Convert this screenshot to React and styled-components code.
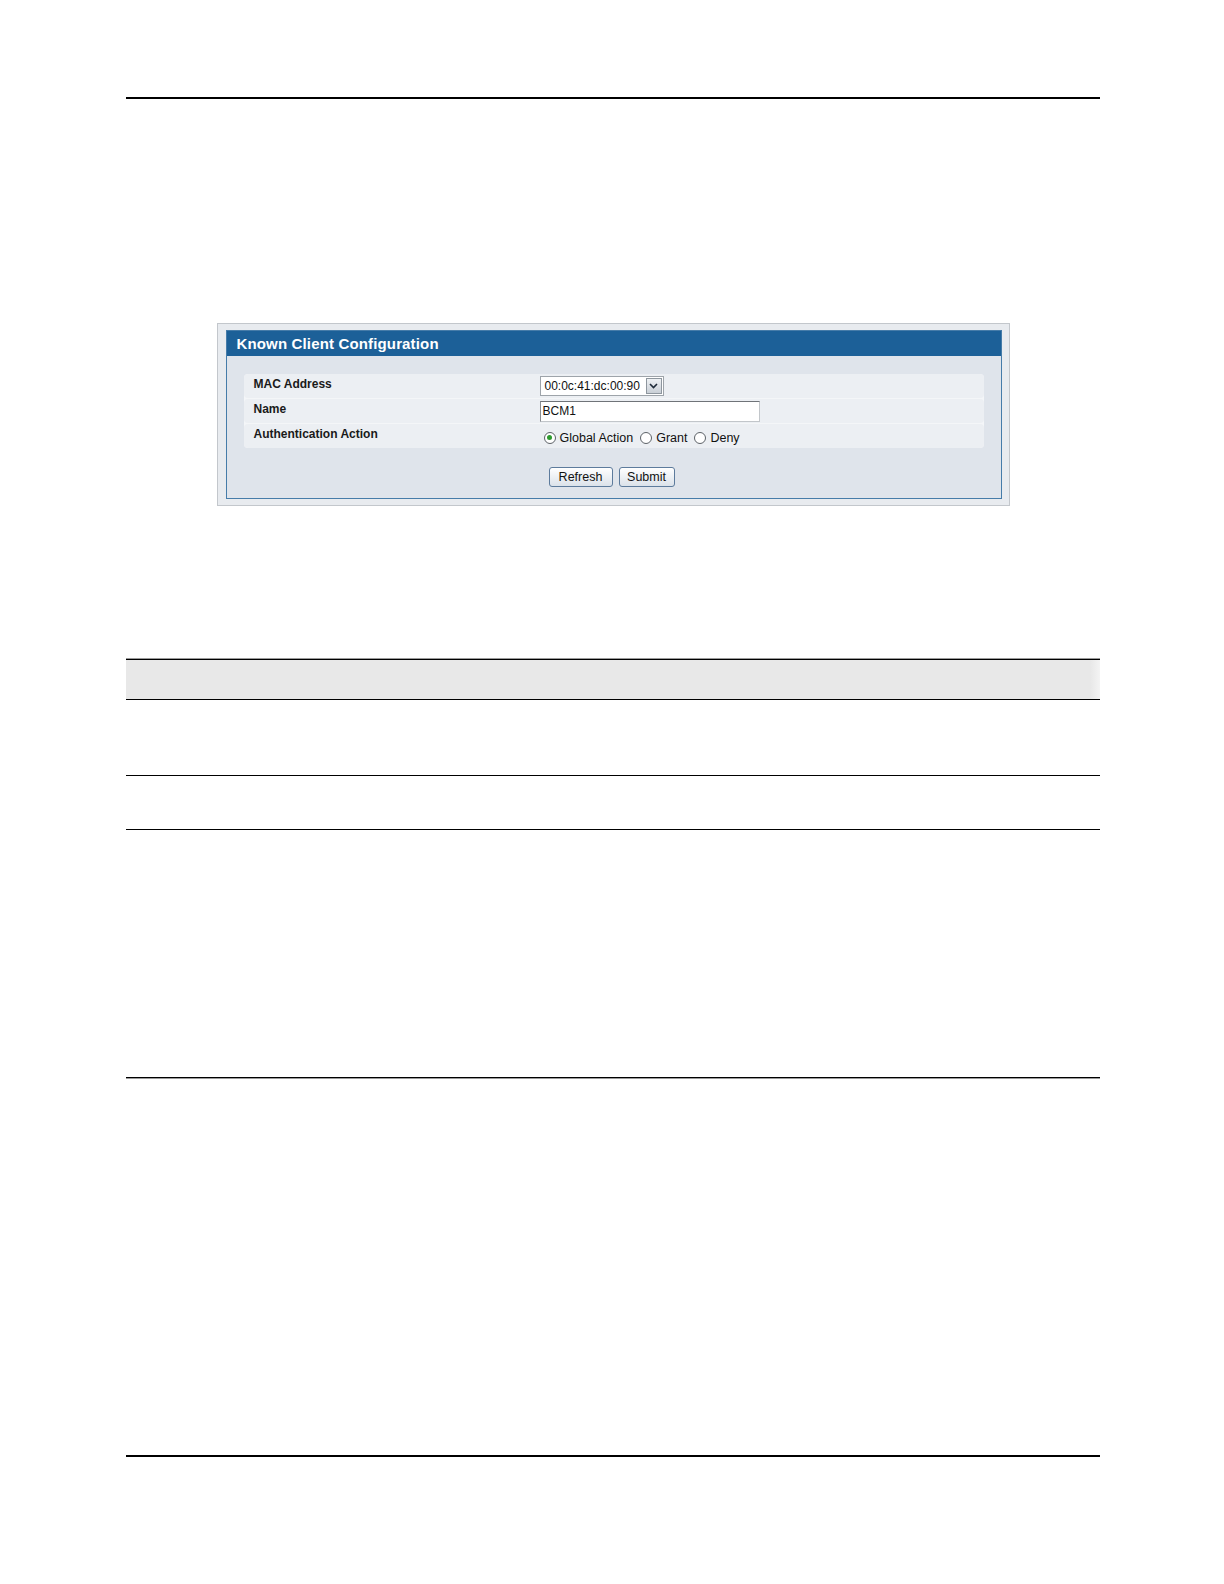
import React from 'react'
import styled, { createGlobalStyle } from 'styled-components'

const GlobalStyle = createGlobalStyle`
  html, body {
    margin: 0;
    padding: 0;
    background: #fff;
  }
  body {
    font-family: "Liberation Sans", Arial, sans-serif;
  }
`

const Page = styled.div`
  width: 1224px;
  min-height: 1584px;
  box-sizing: border-box;
  padding: 97px 124px 0 126px;
  display: flex;
  flex-direction: column;
`

const Rule = styled.div`
  height: 2px;
  background: #000;
  margin-top: ${props => props.top || 0}px;
`

const Figure = styled.div`
  margin-top: 224px;
  display: flex;
  justify-content: center;
`

const Frame = styled.div`
  width: 793px;
  box-sizing: border-box;
  border: 1px solid #c3c7cc;
  background: #e8ebef;
  padding: 6px 7px 6px 8px;
`

const Panel = styled.div`
  border: 1px solid #467ca9;
  background: #dfe4eb;
  padding-bottom: 11px;
`

const PanelTitle = styled.div`
  height: 25px;
  background: #1c6098;
  color: #fff;
  font-weight: bold;
  font-size: 15px;
  line-height: 25px;
  padding-left: 10px;
  letter-spacing: 0.15px;
`

const RowGroup = styled.div`
  margin: 18px 17px 0 17px;
  display: flex;
  flex-direction: column;
  gap: 1px;
  background: #f4f6f8;
  border-radius: 4px;
`

const Row = styled.div`
  display: flex;
  height: 24px;
  background: #eceff3;
  border-radius: 4px;
`

const Label = styled.div`
  width: 296px;
  box-sizing: border-box;
  padding: 3px 0 0 10px;
  font-size: 12px;
  font-weight: bold;
  color: #1a1a1a;
`

const Value = styled.div`
  flex: 1;
  display: flex;
  align-items: ${props => (props.top ? 'flex-start' : 'center')};
  font-size: 12px;
  color: #111;
`

const Select = styled.div`
  width: 124px;
  height: 20px;
  box-sizing: border-box;
  border: 1px solid #9ea4aa;
  background: #fff;
  display: flex;
  align-items: center;
  justify-content: space-between;
  padding-left: 4px;
`

const SelectArrow = styled.div`
  width: 16px;
  height: 16px;
  margin-right: 1px;
  box-sizing: border-box;
  border: 1px solid #8e969e;
  background: linear-gradient(#eef1f4, #c9cfd6);
  display: flex;
  align-items: center;
  justify-content: center;
`

const TextInput = styled.div`
  width: 220px;
  height: 21px;
  box-sizing: border-box;
  margin-top: 2px;
  border: 1px solid #c2c6ca;
  border-top-color: #6f7378;
  border-left-color: #8a8e93;
  background: #fff;
  padding-left: 2px;
  line-height: 19px;
`

const RadioGroup = styled.div`
  display: flex;
  align-items: center;
  gap: 7px;
  padding-left: 4px;
  padding-top: 3px;
  font-size: 12.5px;
`

const RadioItem = styled.label`
  display: flex;
  align-items: center;
  gap: 4px;
`

const RadioCircle = styled.span`
  width: 12px;
  height: 12px;
  box-sizing: border-box;
  border-radius: 50%;
  border: 1px solid #5d6268;
  background: #fff;
  display: flex;
  align-items: center;
  justify-content: center;
  &::after {
    content: '';
    width: 5px;
    height: 5px;
    border-radius: 50%;
    background: ${props => (props.checked ? '#2e9a2e' : 'transparent')};
  }
`

const Buttons = styled.div`
  display: flex;
  gap: 6px;
  margin: 19px 0 0 322px;
`

const Button = styled.div`
  width: ${props => props.w}px;
  height: 20px;
  box-sizing: border-box;
  border: 1px solid #5d7b9c;
  border-radius: 3px;
  background: linear-gradient(#ffffff, #dbe2ea);
  font-size: 12.5px;
  color: #111;
  display: flex;
  align-items: center;
  justify-content: center;
`

const DocTable = styled.div`
  margin-top: 153px;
  border-top: 1px solid #000;
  box-shadow: 0 -1px 0 #9a9a9a;
  display: flex;
  flex-direction: column;
`

const TableRow = styled.div`
  height: ${props => props.h}px;
  border-bottom: 1px solid #000;
  box-shadow: 0 1px 0 #9a9a9a;
  background: ${props => (props.head ? 'linear-gradient(90deg, #e8e8e8 99%, #f4f4f4)' : '#fff')};
`

function Radio({ checked, children }) {
  return (
    <RadioItem>
      <RadioCircle checked={checked} />
      {children}
    </RadioItem>
  )
}

function App() {
  return (
    <>
      <GlobalStyle />
      <Page>
        <Rule />

        <Figure>
          <Frame>
            <Panel>
              <PanelTitle>Known Client Configuration</PanelTitle>
              <RowGroup>
                <Row>
                  <Label>MAC Address</Label>
                  <Value>
                    <Select>
                      00:0c:41:dc:00:90
                      <SelectArrow>
                        <svg width="9" height="6" viewBox="0 0 9 6">
                          <path d="M1 1 L4.5 4.5 L8 1" fill="none" stroke="#1d2a38" strokeWidth="1.6" />
                        </svg>
                      </SelectArrow>
                    </Select>
                  </Value>
                </Row>
                <Row>
                  <Label>Name</Label>
                  <Value top>
                    <TextInput>BCM1</TextInput>
                  </Value>
                </Row>
                <Row>
                  <Label>Authentication Action</Label>
                  <Value>
                    <RadioGroup>
                      <Radio checked>Global Action</Radio>
                      <Radio>Grant</Radio>
                      <Radio>Deny</Radio>
                    </RadioGroup>
                  </Value>
                </Row>
              </RowGroup>
              <Buttons>
                <Button w={64}>Refresh</Button>
                <Button w={56}>Submit</Button>
              </Buttons>
            </Panel>
          </Frame>
        </Figure>

        <DocTable>
          <TableRow head h={39} />
          <TableRow h={75} />
          <TableRow h={53} />
          <TableRow h={247} />
        </DocTable>

        <Rule top={377} />
      </Page>
    </>
  )
}

export default App
